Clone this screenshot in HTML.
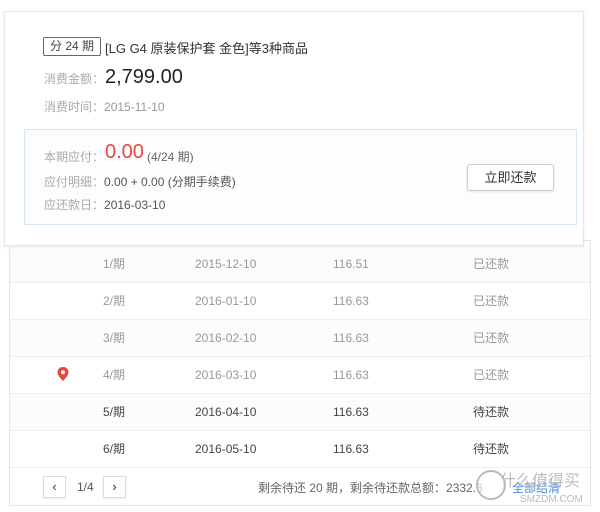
<!DOCTYPE html>
<html><head><meta charset="utf-8"><style>
*{margin:0;padding:0;box-sizing:border-box}
body{width:600px;height:512px;background:#fff;font-family:"Liberation Sans","Noto Sans CJK SC",sans-serif;position:relative;overflow:hidden;font-size:12px;color:#333}
.abs{position:absolute;white-space:nowrap}
.card{position:absolute;left:4px;top:11px;width:580px;height:235px;border:1px solid #e6e6e6;background:#fff;box-shadow:0 1px 3px rgba(0,0,0,.08);z-index:2}
.tag{position:absolute;left:38px;top:25px;width:58px;height:19px;border:1px solid #666;border-radius:2px;font-size:12px;line-height:17px;text-align:center;color:#444}
.lbl{color:#aaa}
.inner{position:absolute;left:19px;top:117px;width:553px;height:96px;border:1px solid #d5e5f5;background:#fbfdff}
.btn{position:absolute;width:87px;height:27px;border:1px solid #ccc;border-radius:3px;background:#fff;text-align:center;line-height:25px;font-size:13px;color:#333;box-shadow:0 1px 2px rgba(0,0,0,.1)}
.table{position:absolute;left:9px;top:240px;width:582px;height:266px;border:1px solid #e6e6e6;background:#fff}
.row{position:absolute;left:0;width:580px;height:37px;border-bottom:1px solid #eee;color:#999;font-size:12px;line-height:37px}
.row span{position:absolute}
.dark{color:#444}
.pg{position:absolute;top:476px;width:23px;height:22px;border:1px solid #ddd;text-align:center;line-height:20px;font-size:13px;color:#333;box-shadow:0 1px 2px rgba(0,0,0,.08)}
</style></head><body>
<div class="table">
<div class="row" style="top:5px;background:#fcfcfc"><span style="left:93px">1/期</span><span style="left:185px">2015-12-10</span><span style="left:323px">116.51</span><span style="left:463px">已还款</span></div>
<div class="row" style="top:42px"><span style="left:93px">2/期</span><span style="left:185px">2016-01-10</span><span style="left:323px">116.63</span><span style="left:463px">已还款</span></div>
<div class="row" style="top:79px;background:#fcfcfc"><span style="left:93px">3/期</span><span style="left:185px">2016-02-10</span><span style="left:323px">116.63</span><span style="left:463px">已还款</span></div>
<div class="row" style="top:116px"><svg style="position:absolute;left:47px;top:10px" width="12" height="16" viewBox="0 0 12 16"><path d="M6 0C2.7 0 0.5 2.3 0.5 5.3 0.5 9 6 14 6 14s5.5-5 5.5-8.7C11.5 2.3 9.3 0 6 0z" fill="#e8473f"/><circle cx="6" cy="5.3" r="2" fill="#fff"/></svg><span style="left:93px">4/期</span><span style="left:185px">2016-03-10</span><span style="left:323px">116.63</span><span style="left:463px">已还款</span></div>
<div class="row dark" style="top:153px;background:#fcfcfc"><span style="left:93px">5/期</span><span style="left:185px">2016-04-10</span><span style="left:323px">116.63</span><span style="left:463px">待还款</span></div>
<div class="row dark" style="top:190px"><span style="left:93px">6/期</span><span style="left:185px">2016-05-10</span><span style="left:323px">116.63</span><span style="left:463px">待还款</span></div>
</div>
<div class="pg" style="left:43px">‹</div>
<div class="abs" style="left:77px;top:480px;color:#555">1/4</div>
<div class="pg" style="left:103px">›</div>
<div class="abs" style="left:258px;top:479px;color:#666">剩余待还 20 期，剩余待还款总额：2332.6</div>
<div class="abs" style="left:512px;top:479px;color:#4a8be0">全部结清</div>
<div class="abs" style="left:500px;top:467px;color:#bbb;font-size:16px">什么值得买</div>
<div class="abs" style="left:520px;top:494px;color:#bbb;font-size:10px">SMZDM.COM</div>
<div class="abs" style="left:476px;top:470px;width:30px;height:30px;border:2px solid #bbb;border-radius:50%;background:rgba(255,255,255,.6)"></div>

<div class="card">
<div class="tag">分 24 期</div>
<div class="abs" style="left:100px;top:26px;font-size:13px;color:#333">[LG G4 原装保护套 金色]等3种商品</div>
<div class="abs lbl" style="left:39px;top:58px">消费金额：</div>
<div class="abs" style="left:100px;top:54px;font-size:20px;color:#222">2,799.00</div>
<div class="abs lbl" style="left:39px;top:86px">消费时间：<span style="color:#999">2015-11-10</span></div>
<div class="inner"></div>
<div class="abs lbl" style="left:39px;top:136px">本期应付：</div>
<div class="abs" style="left:100px;top:129px;font-size:20px;color:#e8473f">0.00</div>
<div class="abs" style="left:142px;top:136px;color:#666">(4/24 期)</div>
<div class="abs lbl" style="left:39px;top:161px">应付明细：<span style="color:#555">0.00 + 0.00 (分期手续费)</span></div>
<div class="abs lbl" style="left:39px;top:184px">应还款日：<span style="color:#555">2016-03-10</span></div>
<div class="btn" style="left:462px;top:152px">立即还款</div>
</div>
</body></html>
